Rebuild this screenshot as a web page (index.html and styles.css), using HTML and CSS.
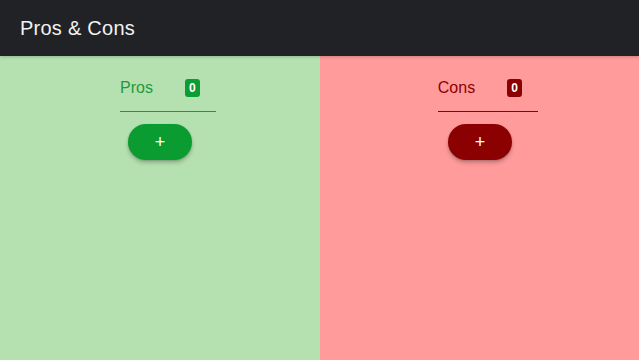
FILE: index.html
```html
<!DOCTYPE html>
<html>
<head>
<meta charset="utf-8">
<link rel="stylesheet" href="styles.css">
</head>
<body>
<header class="topbar">
  <h1 class="title">Pros &amp; Cons</h1>
</header>
<main class="board">
  <section class="column pros">
    <div class="heading">
      <span class="label">Pros</span>
      <span class="badge">0</span>
    </div>
    <button class="add">+</button>
  </section>
  <section class="column cons">
    <div class="heading">
      <span class="label">Cons</span>
      <span class="badge">0</span>
    </div>
    <button class="add">+</button>
  </section>
</main>
</body>
</html>
```
FILE: styles.css
```css
html, body {
  margin: 0;
  padding: 0;
  height: 100%;
}
body {
  font-family: "Liberation Sans", Arial, sans-serif;
  display: flex;
  flex-direction: column;
  overflow: hidden;
}
.topbar {
  height: 56px;
  flex: none;
  background: #212226;
  display: flex;
  align-items: center;
  padding-left: 20px;
  position: relative;
  z-index: 1;
  box-shadow: 0 1px 3px rgba(0,0,0,0.2);
}
.title {
  margin: 0;
  color: #f2f2f2;
  font-size: 20px;
  font-weight: 400;
  letter-spacing: 0.25px;
}
.board {
  flex: 1;
  display: flex;
}
.column {
  flex: 0 0 320px;
  display: flex;
  flex-direction: column;
  align-items: center;
  padding-top: 21px;
}
.pros { background: #b5e1b0; }
.cons { background: #ff9b9b; }
.heading {
  display: flex;
  align-items: center;
  margin-left: 16px;
  padding: 0 16px 13px 0;
  border-bottom: 1px solid currentColor;
  height: 21px;
}
.label {
  font-size: 16px;
  line-height: 21px;
}
.badge {
  margin-left: 32px;
  width: 15px;
  height: 18px;
  border-radius: 3px;
  color: #fff;
  font-size: 12px;
  font-weight: 700;
  display: flex;
  align-items: center;
  justify-content: center;
}
.pros .heading { color: #1e9a3c; }
.pros .badge { background: #0b9b37; }
.cons .heading { color: #8b0000; }
.cons .badge { background: #8b0000; }
.add {
  margin-top: 12px;
  width: 64px;
  height: 36px;
  border: none;
  border-radius: 18px;
  color: #fff;
  font-family: "Liberation Sans", Arial, sans-serif;
  font-size: 18px;
  padding: 0;
  box-shadow: 0 3px 4px rgba(0,0,0,0.2), 0 1px 2px rgba(0,0,0,0.15);
}
.pros .add { background: #0a9b31; }
.cons .add { background: #8b0000; }
```
